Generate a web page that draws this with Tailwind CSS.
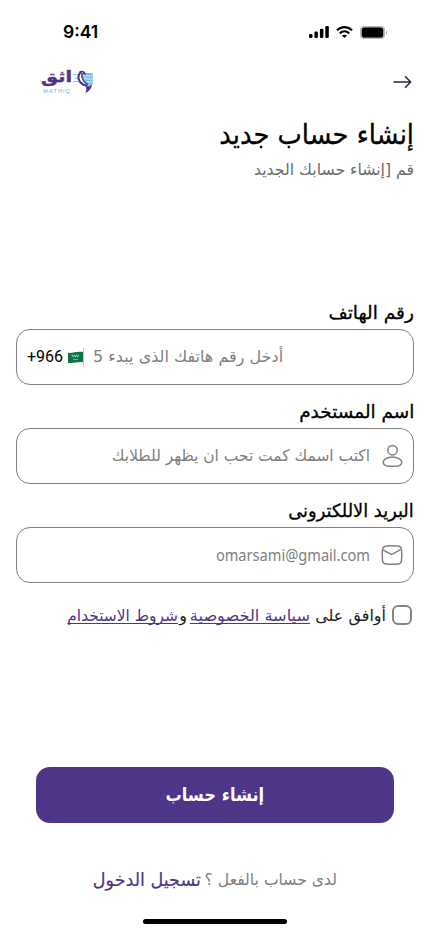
<!DOCTYPE html>
<html lang="ar" dir="rtl">
<head>
<meta charset="utf-8">
<meta name="viewport" content="width=device-width, initial-scale=1">
<title>إنشاء حساب جديد</title>
<script src="https://cdn.jsdelivr.net/npm/@tailwindcss/browser@4"></script>
</head>
<body class="bg-white">
<main class="w-[430px] h-[932px] overflow-hidden bg-white flex flex-col font-['DejaVu_Sans',sans-serif] text-black">

  <!-- status bar -->
  <div dir="ltr" class="h-16 shrink-0 flex items-center justify-between pl-[63px] pr-[43px]">
    <span class="font-['Inter',sans-serif] font-semibold text-[17.500px] leading-5">9:41</span>
    <div class="flex items-center gap-[7px]">
      <svg width="20" height="12" viewBox="0 0 20 12"><rect x="0" y="8" width="3.5" height="4" rx="1.200"/><rect x="5.400" y="5.500" width="3.500" height="6.500" rx="1.200"/><rect x="10.900" y="2.800" width="3.500" height="9.200" rx="1.200"/><rect x="16.300" y="0" width="3.500" height="12" rx="1.200"/></svg>
      <svg width="17" height="12" viewBox="0 0 17 12" fill="none" stroke="#000" stroke-width="2.300"><path d="M1 4.200C5.200.1 11.800.1 16 4.200"/><path d="M3.800 7.300c2.700-2.500 6.700-2.500 9.400 0"/><path d="M8.500 12 5.900 9.600c1.500-1.300 3.700-1.300 5.200 0z" fill="#000" stroke="none"/></svg>
      <svg width="27" height="13" viewBox="0 0 27 13"><rect x="0" y="0" width="25" height="13" rx="4" fill="#b9b9b9"/><rect x="1.800" y="1.500" width="21.400" height="10" rx="2.800"/><path d="M26 4.500v4c1.300-.6 1.300-3.400 0-4z" fill="#a6a6a6"/></svg>
    </div>
  </div>

  <!-- header -->
  <header class="h-9 shrink-0 flex items-center justify-between pr-[18px] pl-[40px]">
    <svg width="19" height="14" viewBox="0 0 19 14" fill="none" stroke="#232a45" stroke-width="1.500" stroke-linecap="round" stroke-linejoin="round"><path d="M1 7h16.500M12.500 1.700 17.700 7l-5.200 5.300"/></svg>
    <div class="flex items-start gap-px h-[26px]">
      <svg width="21" height="26" viewBox="0 0 21 26" fill="none">
        <path d="M8 4h9.500c1 .5 2 .5 2.500 0v11c-1.500 1.300-3.500 1.800-5.500 1.300C10.500 14.500 8 10 8 4z" fill="#79c2e6"/>
        <path d="M10 6.800c3.500-.5 6 1 10 0M10.500 9.800c3.500-.5 6 1 9.500 0M12 12.800c3-.4 5 .8 8 0" stroke="#dff2fb" stroke-width=".9"/>
        <path d="M8.500 2.600C4.700 5 4.500 9.500 7 12.800c1.800 2.300 4.500 3.600 7.500 3.800" stroke="#4f3588" stroke-width="2.200"/>
        <path d="M6.500 3C9.500 1.500 11.500 3 12 5c-1.500-.8-2.700-.8-3.200.2C8.500 9 11 13 15 15.700" stroke="#4f3588" stroke-width="1.300"/>
        <path d="M19 15.200c-1.500 1.700-3.700 2.400-6.500 2 .9 1.700 1.400 4-.3 6.800 3.500-1.200 6.700-4.500 6.800-8.800z" fill="#4f3588"/>
        <path d="M0 5.500h4.500M1.500 9h3.500M0 12.500h5.500" stroke="#79c2e6" stroke-width="1"/>
      </svg>
      <div class="w-[32px] flex flex-col">
        <span class="block h-[18px] w-[32px] text-[16px] leading-[15px] font-bold text-[#4f3588] [-webkit-text-stroke:.4px_#4f3588] whitespace-nowrap origin-right scale-x-[1.200]">اثق</span>
        <span dir="ltr" class="block font-['Liberation_Sans',sans-serif] text-[5.500px] leading-[6px] tracking-[1.100px] pl-[3px] mt-px text-[#63b1d6] whitespace-nowrap">WATHIQ</span>
      </div>
    </div>
  </header>

  <!-- title -->
  <section class="px-4 pt-[15px] h-[200px] shrink-0">
    <h1 class="w-[193px] h-10 text-[28px] leading-10 whitespace-nowrap origin-right scale-x-[.920] [-webkit-text-stroke:.3px_#000]">إنشاء حساب جديد</h1>
    <p class="w-[159px] mt-[3px] h-6 text-[16px] leading-6 text-[#6d6d6d] whitespace-nowrap origin-right scale-x-[.980]">قم [إنشاء حسابك الجديد</p>
  </section>

  <!-- form -->
  <form class="px-4 flex flex-col shrink-0">
    <label class="h-[29px] text-[18px] leading-[26px] [-webkit-text-stroke:.3px_#000]"><span class="inline-block origin-right scale-x-[1.030]">رقم الهاتف</span></label>
    <div class="h-14 rounded-[14px] border border-[#808080] flex items-center justify-end text-[16px] pl-[10px]">
      <span class="text-[#808080] whitespace-nowrap">أدخل رقم هاتفك الذى يبدء 5</span>
      <span class="h-[19px] w-px bg-[#c4c4c4] mr-[9px]"></span>
      <svg width="15" height="13" viewBox="0 0 15 13"><path d="M0 1.800C4 2.600 9 0 15 1v10.200c-5-.7-10 1.500-15 .6z" fill="#12714a"/><path d="M3.500 4.300h8M4.500 5.600h6.500" stroke="#d5e8de" stroke-width=".8" stroke-dasharray="1.500 .5"/><path d="M5 8.500h5" stroke="#b7d6c7" stroke-width=".6"/></svg>
      <span dir="ltr" class="font-['Roboto',sans-serif] text-[16px] mr-[5px]">+966</span>
    </div>

    <label class="mt-[14px] h-[29px] text-[18px] leading-[26px] [-webkit-text-stroke:.3px_#000]"><span class="inline-block origin-right scale-x-[1.025]">اسم المستخدم</span></label>
    <div class="h-14 rounded-[14px] border border-[#808080] flex items-center gap-3 pr-[10px] text-[16px] text-[#808080]">
      <svg class="shrink-0" width="21" height="24" viewBox="0 0 21 24" fill="none" stroke="#808080" stroke-width="1.500"><circle cx="10.500" cy="6.200" r="4.700"/><path d="M1.200 18.300c0-2.600 4.200-5.300 9.300-5.300s9.300 2.700 9.300 5.300c0 2.500-2.800 3.900-5 3.900H6.200c-2.200 0-5-1.400-5-3.900z"/></svg>
      <span class="w-[258px] whitespace-nowrap origin-right scale-x-[.965]">اكتب اسمك كمت تحب ان يظهر للطلابك</span>
    </div>

    <label class="mt-[14px] h-[29px] text-[18px] leading-[26px] [-webkit-text-stroke:.3px_#000]"><span class="inline-block origin-right scale-x-[.990]">البريد الاللكترونى</span></label>
    <div class="h-14 rounded-[14px] border border-[#808080] flex items-center gap-[11px] pr-[10px] text-[#808080]">
      <svg class="shrink-0" width="22" height="20" viewBox="0 0 22 20" fill="none" stroke="#808080" stroke-width="1.500" stroke-linejoin="round"><path d="M1.500 4.800C1.700 2 2.800 1.100 5.400 1c3.700-.3 7.500-.3 11.200 0 2.600.1 3.700 1 3.900 3.800.3 3.500.3 6.900 0 10.400-.2 2.800-1.300 3.700-3.900 3.800-3.700.3-7.500.3-11.200 0-2.600-.1-3.700-1-3.900-3.800-.3-3.500-.3-6.900 0-10.400z"/><path d="m1.500 4.700 7.700 4.100c.9.500 1.700.5 2.600 0l7.700-4.100"/></svg>
      <span dir="ltr" class="w-[154px] flex justify-end font-['Noto_Sans',sans-serif] text-[16px] whitespace-nowrap origin-right scale-x-[.912]">omarsami@gmail.com</span>
    </div>

    <div class="mt-5 h-6 flex items-center pr-[2px] text-[16px] leading-6 whitespace-nowrap">
      <span class="size-5 shrink-0 rounded-[6px] border-2 border-[#858585] ml-[6px]"></span>
      <span class="w-[76px] pt-px text-[#1c1c1c]">أوافق على</span>
      <a class="w-[120px] pt-px text-[#4f3588] underline underline-offset-[2px] decoration-1 [text-decoration-skip-ink:none] origin-right scale-x-[1.010]">سياسة الخصوصية</a>
      <span class="w-[12px] pt-px pr-[3px] text-[#1c1c1c]">و</span>
      <a class="w-[111px] pt-px text-[#4f3588] underline underline-offset-[2px] decoration-1 [text-decoration-skip-ink:none] origin-right scale-x-[.965]">شروط الاستخدام</a>
    </div>
  </form>

  <!-- actions -->
  <div class="mt-[140px] px-9 shrink-0">
    <button class="w-full h-14 rounded-[14px] bg-[#4f3588] text-white text-[18px] font-bold flex items-center justify-center pb-px">
      <span class="inline-block scale-x-[.900]">إنشاء حساب</span>
    </button>
  </div>
  <p class="mt-[43px] mb-px h-7 shrink-0 flex items-center pr-[93px] leading-7 whitespace-nowrap">
    <span class="w-[136px] text-[16px] text-[#808080] origin-right scale-x-[.975]">لدى حساب بالفعل ؟</span>
    <a class="w-[108px] text-[18px] text-[#4f3588] origin-right scale-x-[.975] [-webkit-text-stroke:.2px_#4f3588]">تسجيل الدخول</a>
  </p>
  <div class="mt-6 mx-auto w-36 h-[5px] rounded-full bg-black shrink-0"></div>
</main>
</body>
</html>
